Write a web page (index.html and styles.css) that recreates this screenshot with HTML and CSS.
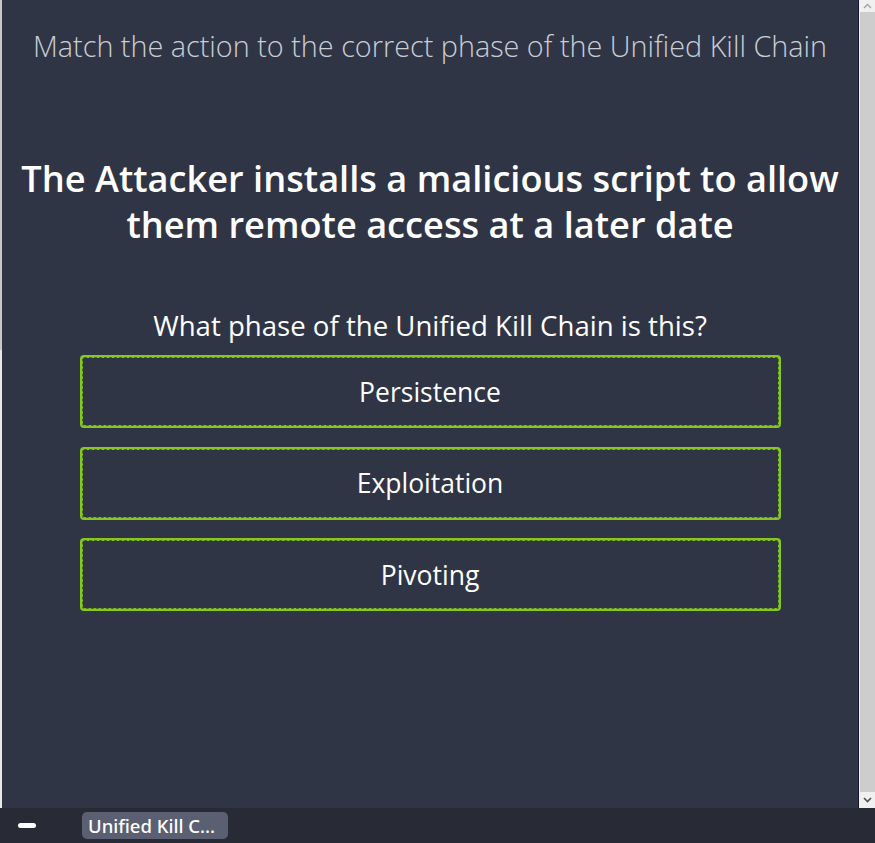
FILE: index.html
```html
<!DOCTYPE html>
<html lang="en">
<head>
<meta charset="utf-8">
<title>Unified Kill Chain</title>
<link rel="stylesheet" href="styles.css">
</head>
<body>
<div class="app">
  <div class="main">
    <div class="left-strip"></div>
    <div class="content">
      <p class="title">Match the action to the correct phase of the Unified Kill Chain</p>
      <h1 class="scenario">The Attacker installs a malicious script to allow them remote access at a later date</h1>
      <p class="question">What phase of the Unified Kill Chain is this?</p>
      <div class="options">
        <div class="option">Persistence</div>
        <div class="option">Exploitation</div>
        <div class="option">Pivoting</div>
      </div>
    </div>
    <div class="scrollbar">
      <div class="sb-arrow sb-up"><svg width="9" height="6" viewBox="0 0 9 6"><path d="M1 5 L4.5 1.5 L8 5" fill="none" stroke="#a3a3a3" stroke-width="1.4"/></svg></div>
      <div class="sb-thumb"></div>
      <div class="sb-arrow sb-down"><svg width="9" height="6" viewBox="0 0 9 6"><path d="M1 1 L4.5 4.5 L8 1" fill="none" stroke="#505050" stroke-width="1.6"/></svg></div>
    </div>
  </div>
  <div class="taskbar">
    <div class="minimize"></div>
    <div class="task">Unified Kill C...</div>
  </div>
</div>
</body>
</html>
```
FILE: styles.css
```css
html, body {
  margin: 0;
  padding: 0;
  height: 100%;
}
body {
  background: #303545;
  font-family: "Open Sans", "Noto Sans", sans-serif;
  overflow: hidden;
}
.app {
  display: flex;
  flex-direction: column;
  height: 843px;
  width: 875px;
}
.main {
  flex: 1;
  display: flex;
  min-height: 0;
}
.left-strip {
  width: 2px;
  background: linear-gradient(#c9c9c9 0 350px, #e9e9e9 350px);
}
.content {
  flex: 1;
  background: #303545;
  border-right: 1px solid #15182a;
  text-align: center;
}
.title {
  margin: 30px 0 0;
  font-size: 28.8px;
  line-height: 32px;
  font-weight: 300;
  color: #c9cdd6;
}
.scenario {
  margin: 93px 0 0;
  font-size: 36.2px;
  line-height: 46px;
  font-weight: 600;
  color: #ffffff;
}
.question {
  margin: 61px 0 0;
  font-size: 27.6px;
  line-height: 34px;
  color: #ffffff;
}
.options {
  margin: 13px auto 0;
  width: 701px;
  display: flex;
  flex-direction: column;
  gap: 18.5px;
}
.option {
  height: 67px;
  border: 3px solid #85c91e;
  outline: 1px dashed #4d6a2c;
  outline-offset: -3px;
  border-radius: 4px;
  display: flex;
  align-items: center;
  justify-content: center;
  font-size: 26.5px;
  color: #ffffff;
}
.scrollbar {
  width: 16px;
  background: #f0f0f0;
  display: flex;
  flex-direction: column;
}
.sb-arrow {
  height: 12px;
  display: flex;
  align-items: center;
  justify-content: center;
}
.sb-thumb {
  flex: 1;
  background: #cdcdcd;
  margin: 0 0 0 1px;
}
.sb-down {
  height: 16px;
  margin-top: -2px;
  background: #f0f0f0;
}
.taskbar {
  height: 35px;
  background: #282b36;
  display: flex;
  align-items: center;
  padding-left: 18px;
}
.minimize {
  width: 18px;
  height: 5px;
  border-radius: 3px;
  background: #ffffff;
}
.task {
  margin-left: 46px;
  width: 146px;
  height: 27px;
  box-sizing: border-box;
  border-radius: 5px;
  background: #5a5f72;
  color: #ffffff;
  font-size: 18.5px;
  font-weight: 500;
  line-height: 27px;
  padding-left: 6px;
  font-family: "Noto Sans", sans-serif;
  white-space: nowrap;
}
```
